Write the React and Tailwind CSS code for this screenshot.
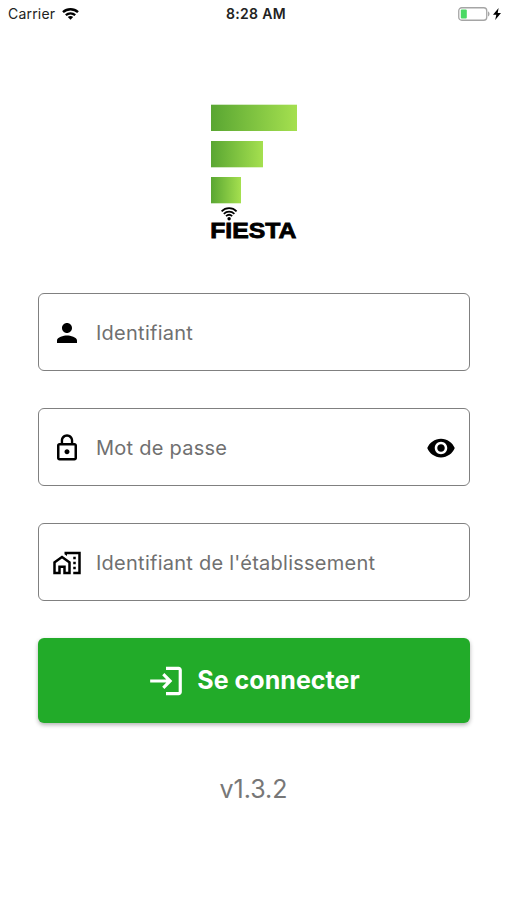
import React from "react";
import {
  MdPerson,
  MdLockOutline,
  MdRemoveRedEye,
  MdOutlineHomeWork,
  MdLogin,
} from "react-icons/md";

function StatusBar() {
  return (
    <header className="grid h-7 grid-cols-3 items-center pl-2 pr-[6px] text-[14px] leading-none text-[#222]">
      <div className="flex items-center gap-[7px]">
        <span className="w-[47px] whitespace-nowrap tracking-[0.2px]">Carrier</span>
        <svg width="17" height="12" viewBox="0 0 17 12" fill="none" stroke="#000" strokeWidth="2.4">
          <path d="M1 4.2C5.2.3 11.8.3 16 4.2" />
          <path d="M3.8 7.2c2.7-2.3 6.7-2.3 9.4 0" />
          <path d="M5.8 9 8.5 11.8 11.2 9C9.7 7.8 7.3 7.8 5.8 9Z" fill="#000" stroke="none" />
        </svg>
      </div>
      <span className="whitespace-nowrap pl-[3px] text-center text-[14px] font-semibold tracking-[0.3px]">8:28 AM</span>
      <div className="flex items-center justify-end gap-[3px]">
        <svg width="32" height="14" viewBox="0 0 32 14">
          <rect x="0.75" y="0.75" width="28" height="12.5" rx="3" fill="#fff" stroke="#a5a5a5" strokeWidth="1.3" />
          <rect x="2.8" y="2.6" width="6" height="8.8" rx="1" fill="#4bd964" />
          <path d="M30 4.6c2 .5 2 4.3 0 4.8Z" fill="#a5a5a5" />
        </svg>
        <svg width="8" height="12" viewBox="0 0 8 12">
          <path d="M5.6 0 0 6.8h3.3L2.2 12 8 4.9H4.7Z" fill="#000" />
        </svg>
      </div>
    </header>
  );
}

function Logo() {
  return (
    <svg className="mx-auto mt-[72px] block" width="91" height="144" viewBox="0 0 91 144">
      <defs>
        <linearGradient id="leaf" x1="0" y1="0" x2="1" y2="0">
          <stop offset="0" stopColor="#59a632" />
          <stop offset="1" stopColor="#a5e04f" />
        </linearGradient>
      </defs>
      <rect x="3" y="4.7" width="86" height="26.3" fill="url(#leaf)" />
      <rect x="3" y="41" width="52" height="26.3" fill="url(#leaf)" />
      <rect x="3" y="77" width="30" height="26.3" fill="url(#leaf)" />
      <g fill="none" stroke="#000" strokeWidth="1.7">
        <path d="M13.6 111.3c4.2-4.2 10.8-4.2 15 0" />
        <path d="M15.8 113.8c3-2.9 7.6-2.9 10.6 0" />
        <path d="M18 116.2c1.8-1.7 4.4-1.7 6.2 0" />
      </g>
      <circle cx="21.1" cy="118.8" r="1.7" />
      <text
        x="2.2"
        y="138.2"
        textLength="86.3"
        lengthAdjust="spacingAndGlyphs"
        stroke="#000"
        strokeWidth="0.8"
        className="font-['Liberation_Sans',Arial,sans-serif] text-[21.5px] font-bold"
      >
        FIESTA
      </text>
    </svg>
  );
}

function Field({ icon: Icon, label, trailing }) {
  return (
    <div className="flex h-[78px] items-center rounded-[6px] border-[1.5px] border-[#808080] pl-[13px] pr-[13px] pt-px">
      <Icon size={30} color="#000" />
      <span className="ml-[14px] flex-1 whitespace-nowrap text-[20px] leading-none tracking-[0.25px] text-[#707070]">
        {label}
      </span>
      {trailing}
    </div>
  );
}

export default function App() {
  return (
    <div className="h-[900px] w-[507px] overflow-hidden bg-white font-['Inter','Liberation_Sans',sans-serif]">
      <StatusBar />
      <Logo />
      <main className="ml-[38px] mt-[49px] flex w-[432px] flex-col gap-[37px]">
        <Field icon={MdPerson} label="Identifiant" />
        <Field
          icon={MdLockOutline}
          label="Mot de passe"
          trailing={<MdRemoveRedEye size={30} color="#000" />}
        />
        <Field icon={MdOutlineHomeWork} label="Identifiant de l'établissement" />
        <button className="flex h-[85px] items-center justify-center rounded-[6px] bg-[#22ab29] pr-px text-white shadow-[0_2px_4px_rgba(0,0,0,0.3)]">
          <MdLogin size={38} />
          <span className="ml-3 whitespace-nowrap text-[25px] font-bold leading-none tracking-[0.05px]">Se connecter</span>
        </button>
      </main>
      <p className="mt-[54px] text-center text-[25px] leading-none text-[#777]">v1.3.2</p>
    </div>
  );
}
